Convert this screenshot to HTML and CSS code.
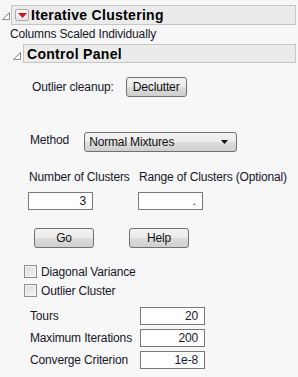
FILE: index.html
```html
<!DOCTYPE html>
<html lang="en">
<head>
  <meta charset="UTF-8">
  <title>Iterative Clustering</title>
  <link rel="stylesheet" href="styles.css">
</head>
<body>
  <div class="outline top">
    <svg class="disclose" width="8" height="8" viewBox="0 0 8 8"><path d="M7.5 0.5 L7.5 7.5 L0.5 7.5 Z" fill="#fff" stroke="#8a8a8a"/></svg>
    <div class="title-bar">
      <span class="red-menu"><svg width="9" height="5" viewBox="0 0 9 5"><path d="M0 0 H9 L4.5 5 Z" fill="#d2141c"/></svg></span>
      <span class="title">Iterative Clustering</span>
    </div>
  </div>
  <div class="note">Columns Scaled Individually</div>
  <div class="outline sub">
    <svg class="disclose" width="8" height="8" viewBox="0 0 8 8"><path d="M7.5 0.5 L7.5 7.5 L0.5 7.5 Z" fill="#fff" stroke="#8a8a8a"/></svg>
    <div class="title-bar">
      <span class="title">Control Panel</span>
    </div>
  </div>

  <div class="panel">
    <div class="row cleanup">
      <span class="label">Outlier cleanup:</span>
      <button class="btn declutter">Declutter</button>
    </div>

    <div class="row method">
      <span class="label">Method</span>
      <div class="combo">
        <span>Normal Mixtures</span>
        <svg width="7" height="4" viewBox="0 0 7 4"><path d="M0 0 H7 L3.5 4 Z" fill="#111"/></svg>
      </div>
    </div>

    <div class="clusters">
      <div class="field">
        <span class="label">Number of Clusters</span>
        <div class="num">3</div>
      </div>
      <div class="field">
        <span class="label">Range of Clusters (Optional)</span>
        <div class="num">.</div>
      </div>
    </div>

    <div class="actions">
      <button class="btn go">Go</button>
      <button class="btn help">Help</button>
    </div>

    <div class="checks">
      <div class="check"><span class="box"></span>Diagonal Variance</div>
      <div class="check"><span class="box"></span>Outlier Cluster</div>
    </div>

    <div class="params">
      <span class="label">Tours</span><div class="num">20</div>
      <span class="label">Maximum Iterations</span><div class="num">200</div>
      <span class="label">Converge Criterion</span><div class="num">1e-8</div>
    </div>
  </div>
</body>
</html>
```

FILE: styles.css
```css
body {
  margin: 0;
  background-color: #f7f7f7;
  font-family: "Liberation Sans", Arial, sans-serif;
  font-size: 12px;
  letter-spacing: -0.15px;
  color: #16162a;
  width: 298px;
  height: 377px;
  overflow: hidden;
}
.outline {
  display: flex;
  align-items: center;
}
.outline .disclose {
  flex: none;
}
.title-bar {
  flex: 1;
  display: flex;
  align-items: center;
  box-sizing: border-box;
  height: 20px;
  margin-right: 2px;
  background-color: #ebebeb;
  border: 1px solid #c6c6c6;
}
.title {
  font-weight: bold;
  font-size: 14px;
  color: #000;
  letter-spacing: 0.3px;
}
.top {
  margin-top: 5px;
}
.top .disclose {
  margin: 2px 1px 0 2px;
}
.top .title-bar {
  padding-left: 3px;
}
.red-menu {
  display: flex;
  align-items: center;
  justify-content: center;
  box-sizing: border-box;
  width: 14px;
  height: 12px;
  margin-right: 2px;
  border: 1px solid #a9a9a9;
  border-radius: 2px;
  background: linear-gradient(#fdfdfd, #e6e6e6);
}
.note {
  margin: 2px 0 0 10px;
  line-height: 15px;
}
.sub {
  margin-top: 2px;
}
.sub .disclose {
  margin: 4px 2px 0 13px;
}
.sub .title-bar {
  height: 19px;
  padding-left: 3px;
}
.row {
  display: flex;
}
.label {
  line-height: 14px;
  white-space: nowrap;
}
.btn {
  font-family: inherit;
  font-size: 12px;
  letter-spacing: inherit;
  color: #111;
  box-sizing: border-box;
  height: 20px;
  padding: 0;
  border: 1px solid #707070;
  border-radius: 3px;
  background: linear-gradient(#f3f3f3 0%, #ebebeb 50%, #dddddd 51%, #cfcfcf 100%);
}
.cleanup {
  margin: 14px 0 0 32px;
  align-items: center;
}
.declutter {
  width: 61px;
  margin-left: 12px;
}
.method {
  margin: 35px 0 0 30px;
}
.method .label {
  margin-top: 1px;
}
.combo {
  display: flex;
  align-items: center;
  justify-content: space-between;
  box-sizing: border-box;
  width: 153px;
  height: 20px;
  margin-left: 15px;
  padding: 0 8px 0 4px;
  border: 1px solid #707070;
  border-radius: 3px;
  background: linear-gradient(#f3f3f3 0%, #ebebeb 50%, #dddddd 51%, #cfcfcf 100%);
  color: #111;
}
.clusters {
  display: flex;
  margin: 18px 0 0 28px;
}
.field {
  display: flex;
  flex-direction: column;
  width: 110px;
}
.field .label {
  margin-left: 1px;
}
.num {
  box-sizing: border-box;
  height: 18px;
  width: 65px;
  padding-right: 6px;
  border: 1px solid #7a7a7a;
  background-color: #fff;
  text-align: right;
  line-height: 16px;
}
.field .num {
  margin-top: 8px;
}
.actions {
  display: flex;
  gap: 35px;
  margin: 18px 0 0 34px;
}
.actions .btn {
  width: 60px;
}
.checks {
  margin: 14px 0 0 24px;
}
.check {
  display: flex;
  align-items: center;
  height: 19px;
}
.box {
  box-sizing: border-box;
  width: 13px;
  height: 13px;
  margin-right: 4px;
  border: 1px solid #8e8f8f;
  background: linear-gradient(135deg, #dcdcdc, #f4f4f4);
  box-shadow: inset 0 0 0 1px #f4f4f4;
}
.params {
  display: grid;
  grid-template-columns: 110px 65px;
  row-gap: 4px;
  align-items: center;
  margin: 7px 0 0 30px;
}
```
